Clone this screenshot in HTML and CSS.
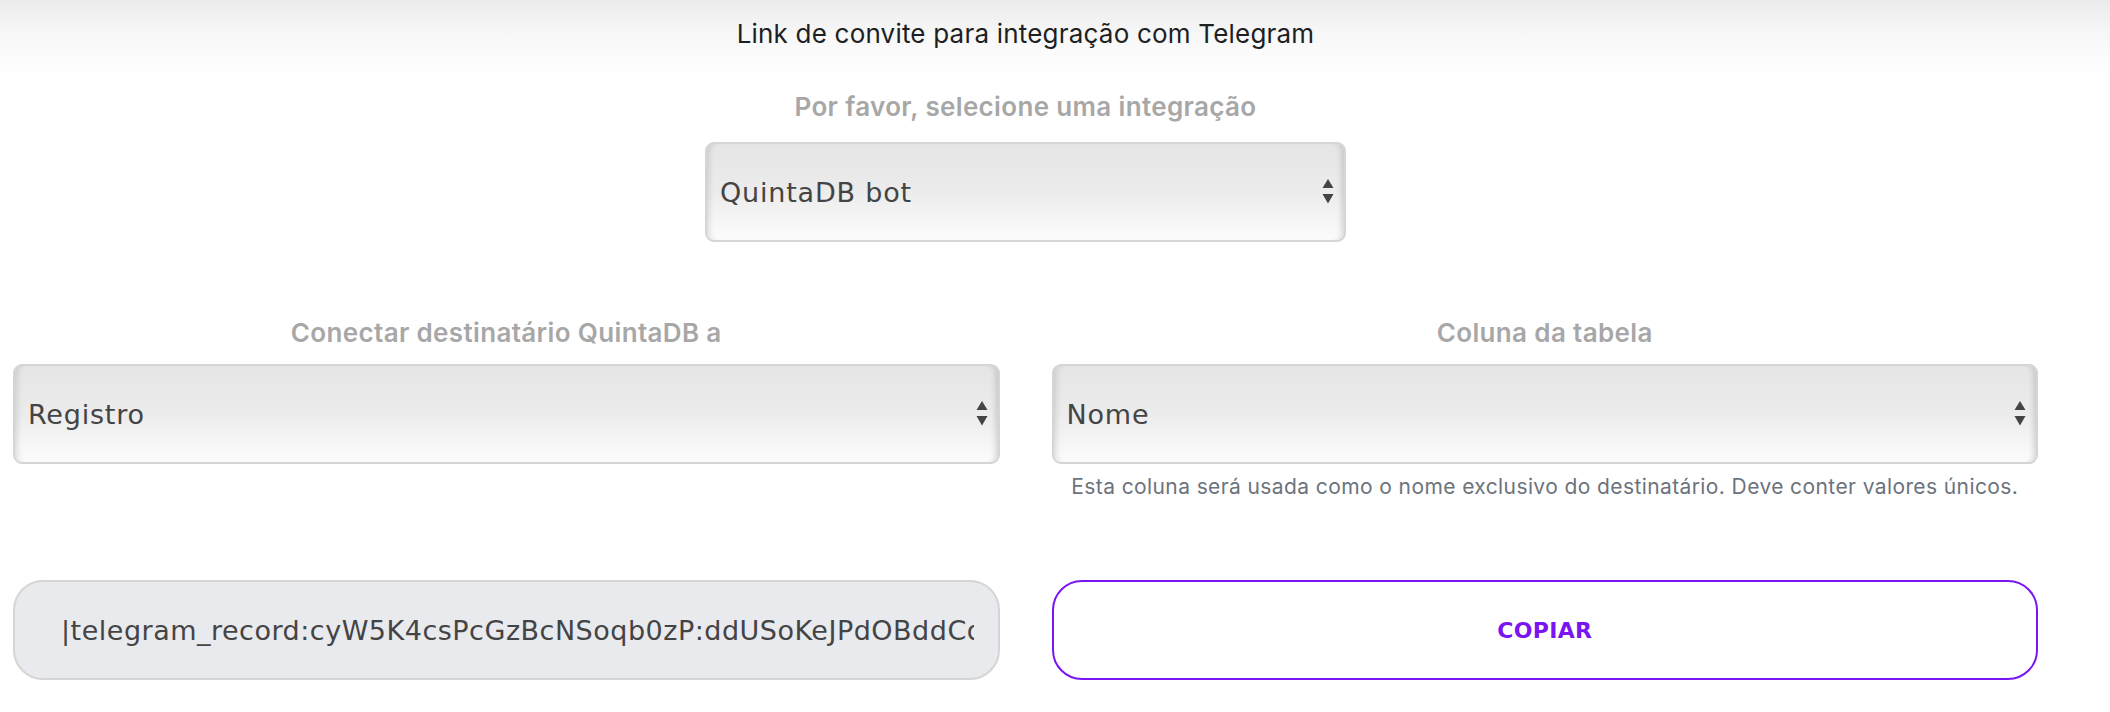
FILE: index.html
```html
<!DOCTYPE html>
<html lang="pt">
<head>
<meta charset="utf-8">
<title>Link de convite para integração com Telegram</title>
<link rel="stylesheet" href="styles.css">
</head>
<body>
  <header class="topbar">
    <div class="wrap">
      <h1 class="title">Link de convite para integração com Telegram</h1>
    </div>
  </header>

  <main class="wrap">
    <section class="intro">
      <label class="label" for="integration">Por favor, selecione uma integração</label>
      <div class="select select-main">
        <select id="integration">
          <option>QuintaDB bot</option>
        </select>
        <svg class="arrows" width="12" height="26" viewBox="0 0 12 26" aria-hidden="true">
          <path d="M6 0 L11.5 9 L0.5 9 Z" fill="#444"/>
          <path d="M0.5 15 L11.5 15 L6 24.5 Z" fill="#444"/>
        </svg>
      </div>
    </section>

    <section class="cols">
      <div class="col">
        <label class="label" for="connect">Conectar destinatário QuintaDB a</label>
        <div class="select">
          <select id="connect">
            <option>Registro</option>
          </select>
          <svg class="arrows" width="12" height="26" viewBox="0 0 12 26" aria-hidden="true">
            <path d="M6 0 L11.5 9 L0.5 9 Z" fill="#444"/>
            <path d="M0.5 15 L11.5 15 L6 24.5 Z" fill="#444"/>
          </svg>
        </div>
      </div>
      <div class="col">
        <label class="label" for="column">Coluna da tabela</label>
        <div class="select">
          <select id="column">
            <option>Nome</option>
          </select>
          <svg class="arrows" width="12" height="26" viewBox="0 0 12 26" aria-hidden="true">
            <path d="M6 0 L11.5 9 L0.5 9 Z" fill="#444"/>
            <path d="M0.5 15 L11.5 15 L6 24.5 Z" fill="#444"/>
          </svg>
        </div>
        <p class="help">Esta coluna será usada como o nome exclusivo do destinatário. Deve conter valores únicos.</p>
      </div>
    </section>

    <section class="cols actions">
      <div class="link-field">
        <div class="link-clip">
          <input class="link-input" type="text" readonly value="|telegram_record:cyW5K4csPcGzBcNSoqb0zP:ddUSoKeJPdOBddCqLx8Rt2VnH">
        </div>
      </div>
      <button class="copy-btn" type="button">Copiar</button>
    </section>
  </main>
</body>
</html>
```

FILE: styles.css
```css
* {
  box-sizing: border-box;
}

html, body {
  margin: 0;
  padding: 0;
  background: #ffffff;
}

body {
  font-family: Inter, "Liberation Sans", Arial, sans-serif;
  color: #212529;
}

.topbar {
  height: 75px;
  padding-top: 18px;
  background: linear-gradient(to bottom, #ebebeb 0%, #f7f7f7 45%, #ffffff 100%);
}

.wrap {
  width: 2051px;
  padding: 0 13px;
}

.title {
  margin: 0;
  font-size: 26px;
  line-height: 32px;
  font-weight: 400;
  text-align: center;
  color: #1d1f22;
  letter-spacing: 0.2px;
}

.intro {
  display: flex;
  flex-direction: column;
  align-items: center;
  padding-top: 16px;
}

.label {
  display: block;
  font-size: 26px;
  line-height: 32px;
  font-weight: 600;
  color: #a7a7a7;
  text-align: center;
  letter-spacing: 0.35px;
}

.select {
  position: relative;
  width: 100%;
  margin-top: 19px;
}

.select-main {
  width: 641px;
}

.select select {
  display: block;
  width: 100%;
  height: 100px;
  margin: 0;
  padding: 0 40px 0 13px;
  -webkit-appearance: none;
  appearance: none;
  border: 2px solid #d5d5d5;
  border-radius: 9px;
  background: linear-gradient(to bottom, #e5e5e5 0%, #e9e9e9 30%, #ececec 50%, #f4f4f4 75%, #fcfcfc 100%);
  box-shadow: inset 7px 0 6px -5px rgba(0, 0, 0, 0.13), inset -7px 0 6px -5px rgba(0, 0, 0, 0.16);
  font-family: "DejaVu Sans", Verdana, sans-serif;
  font-size: 27px;
  letter-spacing: 0.8px;
  color: #444444;
  outline: none;
}

.select .arrows {
  position: absolute;
  right: 12px;
  top: 37px;
}

.cols {
  display: grid;
  grid-template-columns: minmax(0, 1fr) minmax(0, 1fr);
  column-gap: 52px;
}

.cols:not(.actions) {
  margin-top: 75px;
}

.cols .select {
  margin-top: 15px;
}

.col {
  display: flex;
  flex-direction: column;
}

.help {
  margin: 11px 0 0;
  font-size: 21px;
  line-height: 24px;
  letter-spacing: 0.4px;
  color: #6c737d;
  text-align: center;
}

.actions {
  margin-top: 81px;
}

.link-field {
  display: flex;
  align-items: center;
  height: 100px;
  padding-left: 46px;
  border: 2px solid #d5d5d5;
  border-radius: 30px;
  background: #e9eaee;
  overflow: hidden;
}

.link-clip {
  flex: 1 1 auto;
  min-width: 0;
  margin-right: 24px;
  overflow: hidden;
}

.link-input {
  display: block;
  width: 100%;
  height: 40px;
  margin: 0;
  padding: 0;
  border: none;
  background: transparent;
  font-family: "DejaVu Sans", Verdana, sans-serif;
  font-size: 27px;
  letter-spacing: 0.5px;
  color: #444444;
  outline: none;
}

.copy-btn {
  display: block;
  width: 100%;
  height: 100px;
  margin: 0;
  border: 2px solid #7a14f3;
  border-radius: 30px;
  background: #ffffff;
  color: #7a14f3;
  font-family: "DejaVu Sans", Verdana, sans-serif;
  font-size: 22px;
  font-weight: 700;
  letter-spacing: 0.3px;
  text-transform: uppercase;
  cursor: pointer;
}
```
